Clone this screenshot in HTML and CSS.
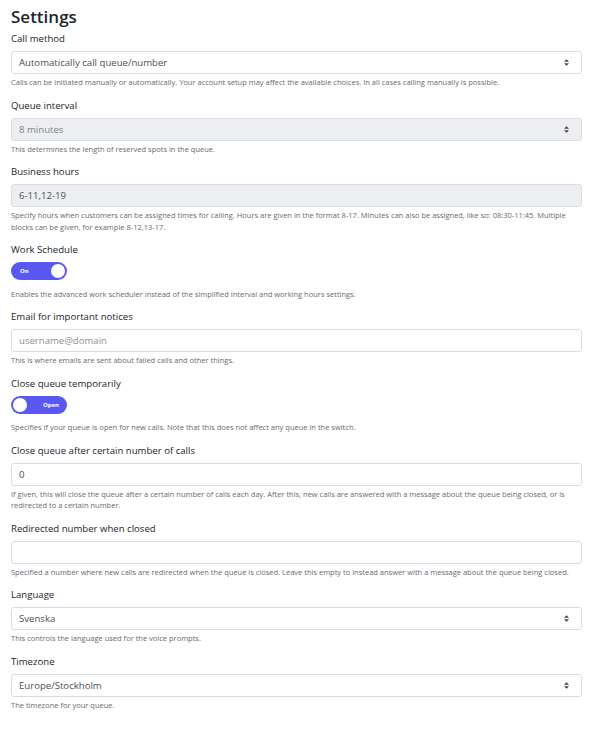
FILE: index.html
```html
<!DOCTYPE html>
<html lang="en">
<head>
    <meta charset="UTF-8">
    <meta name="viewport" content="width=device-width, initial-scale=1.0">
    <title>Settings</title>
    <link rel="stylesheet" href="styles.css">
</head>
<body>
    <div class="page">
        <h1>Settings</h1>

        <div class="form-group">
            <label class="field-label">Call method</label>
            <div class="select">
                <span>Automatically call queue/number</span>
                <svg class="arrows" width="5" height="7" viewBox="0 0 6 8"><path d="M3 0 L6 3 L0 3 Z M3 8 L6 5 L0 5 Z"/></svg>
            </div>
            <div class="help">Calls can be initiated manually or automatically. Your account setup may affect the available choices. In all cases calling manually is possible.</div>
        </div>

        <div class="form-group">
            <label class="field-label">Queue interval</label>
            <div class="select disabled">
                <span>8 minutes</span>
                <svg class="arrows" width="5" height="7" viewBox="0 0 6 8"><path d="M3 0 L6 3 L0 3 Z M3 8 L6 5 L0 5 Z"/></svg>
            </div>
            <div class="help">This determines the length of reserved spots in the queue.</div>
        </div>

        <div class="form-group">
            <label class="field-label">Business hours</label>
            <div class="input disabled value">6-11,12-19</div>
            <div class="help">Specify hours when customers can be assigned times for calling. Hours are given in the format 8-17. Minutes can also be assigned, like so: 08:30-11:45. Multiple blocks can be given, for example 8-12,13-17.</div>
        </div>

        <div class="form-group">
            <label class="field-label">Work Schedule</label>
            <div class="toggle on">
                <span class="toggle-text">On</span>
                <span class="knob"></span>
            </div>
            <div class="help toggle-help">Enables the advanced work scheduler instead of the simplified interval and working hours settings.</div>
        </div>

        <div class="form-group">
            <label class="field-label">Email for important notices</label>
            <div class="input placeholder">username@domain</div>
            <div class="help">This is where emails are sent about failed calls and other things.</div>
        </div>

        <div class="form-group">
            <label class="field-label">Close queue temporarily</label>
            <div class="toggle off">
                <span class="knob"></span>
                <span class="toggle-text">Open</span>
            </div>
            <div class="help toggle-help">Specifies if your queue is open for new calls. Note that this does not affect any queue in the switch.</div>
        </div>

        <div class="form-group">
            <label class="field-label">Close queue after certain number of calls</label>
            <div class="input value">0</div>
            <div class="help">If given, this will close the queue after a certain number of calls each day. After this, new calls are answered with a message about the queue being closed, or is redirected to a certain number.</div>
        </div>

        <div class="form-group">
            <label class="field-label">Redirected number when closed</label>
            <div class="input"></div>
            <div class="help">Specified a number where new calls are redirected when the queue is closed. Leave this empty to instead answer with a message about the queue being closed.</div>
        </div>

        <div class="form-group">
            <label class="field-label">Language</label>
            <div class="select">
                <span>Svenska</span>
                <svg class="arrows" width="5" height="7" viewBox="0 0 6 8"><path d="M3 0 L6 3 L0 3 Z M3 8 L6 5 L0 5 Z"/></svg>
            </div>
            <div class="help">This controls the language used for the voice prompts.</div>
        </div>

        <div class="form-group">
            <label class="field-label">Timezone</label>
            <div class="select">
                <span>Europe/Stockholm</span>
                <svg class="arrows" width="5" height="7" viewBox="0 0 6 8"><path d="M3 0 L6 3 L0 3 Z M3 8 L6 5 L0 5 Z"/></svg>
            </div>
            <div class="help">The timezone for your queue.</div>
        </div>
    </div>
</body>
</html>
```

FILE: styles.css
```css
body {
    font-family: 'Open Sans', 'Noto Sans', sans-serif;
    margin: 0;
    background-color: #fff;
    color: #212529;
}
.page {
    padding: 5px 23px 0 11px;
}
h1 {
    font-size: 17px;
    font-weight: 600;
    line-height: 24px;
    margin: 0 0 2px;
}
.form-group {
    margin-bottom: 9px;
}
.field-label {
    display: block;
    font-size: 9.6px;
    line-height: 16px;
    margin-bottom: 4px;
}
.select, .input {
    box-sizing: border-box;
    height: 23px;
    border: 1px solid #d9dde2;
    border-radius: 3px;
    padding: 0 7px;
    font-size: 9.6px;
    display: flex;
    align-items: center;
    justify-content: space-between;
    color: #495057;
}
.disabled {
    background-color: #eceef1;
}
.select.disabled span {
    color: #7d8288;
}
.placeholder {
    color: #8a9096;
}
.arrows {
    fill: #444;
    margin-right: 5px;
}
.help {
    font-size: 7.5px;
    line-height: 11.5px;
    margin-top: 3px;
    color: #666b70;
}
.toggle {
    box-sizing: border-box;
    width: 56px;
    height: 18px;
    border-radius: 9px;
    background-color: #5b58f2;
    display: flex;
    align-items: center;
    justify-content: space-between;
    padding: 0 2px 0 2px;
}
.knob {
    width: 14px;
    height: 14px;
    border-radius: 50%;
    background-color: #fff;
}
.toggle-text {
    color: #fff;
    font-size: 6px;
    font-weight: 700;
}
.toggle.on .toggle-text {
    margin-left: 7px;
}
.toggle.off .toggle-text {
    margin-right: 6px;
}
.toggle-help {
    margin-top: 8.5px;
}
```
